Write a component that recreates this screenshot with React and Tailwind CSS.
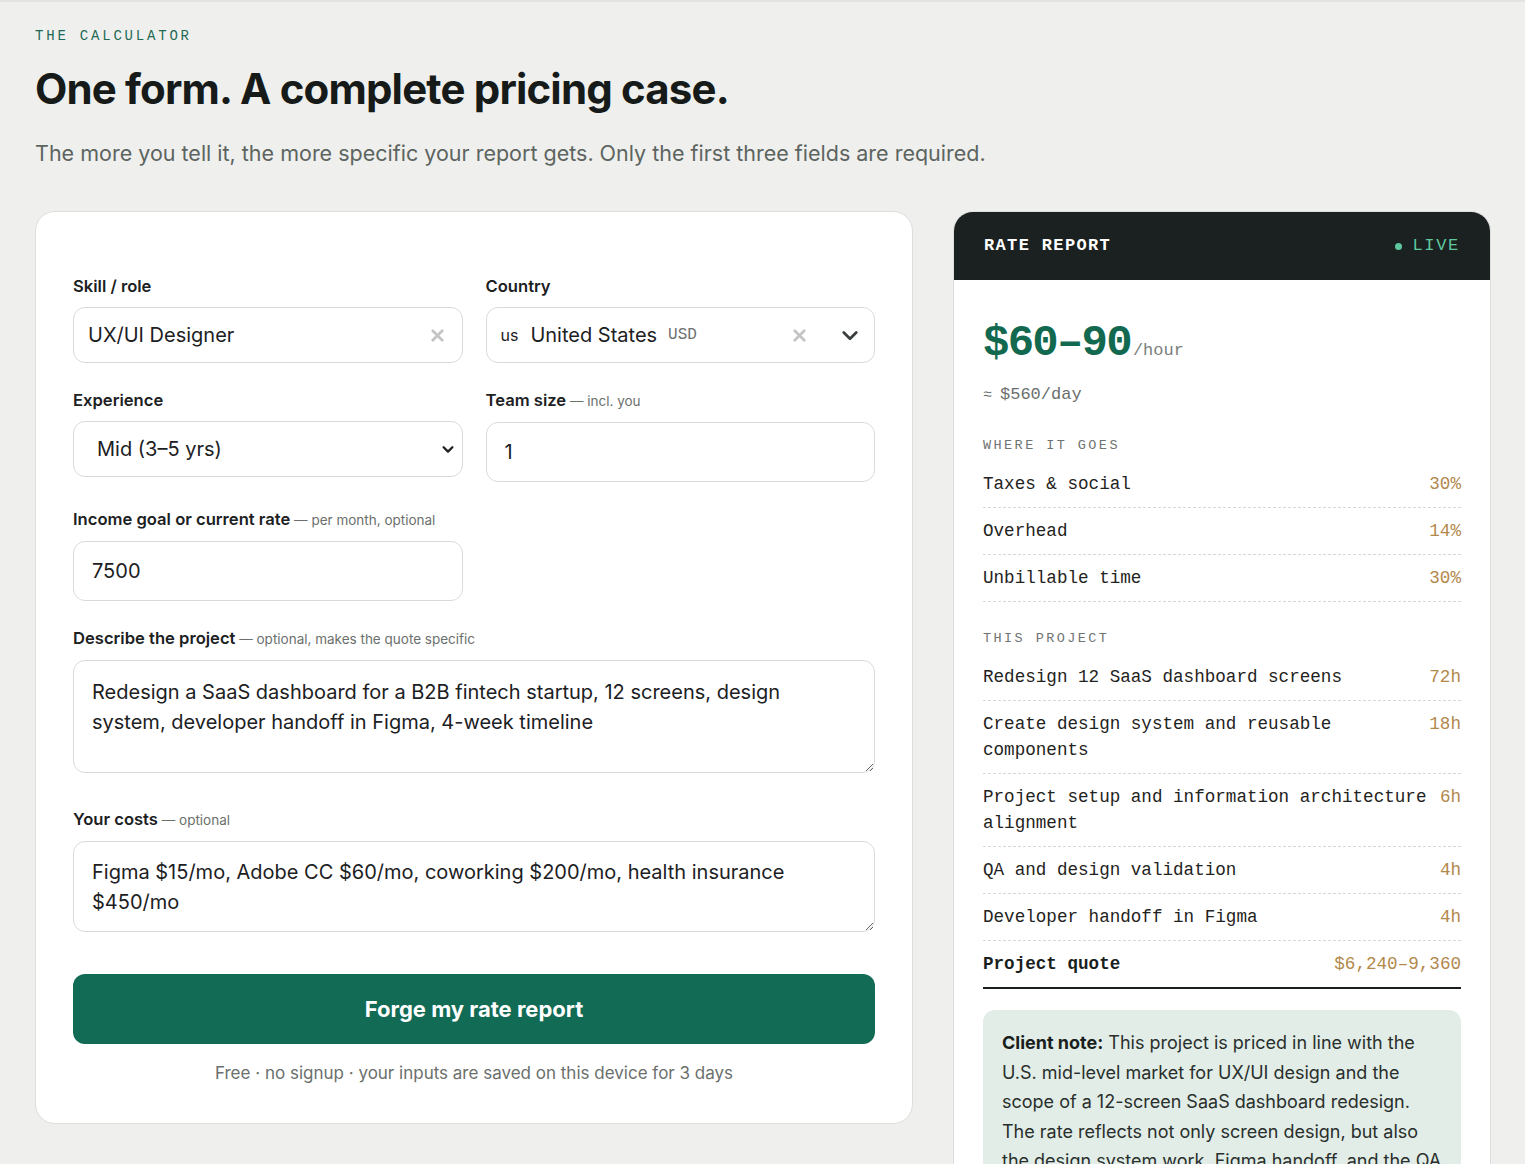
import React from "react";

const mono = { fontFamily: '"Liberation Mono", "DejaVu Sans Mono", monospace' };

const XIcon = ({ className }) => (
  <svg viewBox="0 0 16 16" className={className} fill="none" stroke="currentColor" strokeWidth="2.6" strokeLinecap="round">
    <path d="M3.5 3.5l9 9M12.5 3.5l-9 9" />
  </svg>
);

const Chevron = ({ className, width = 2.2 }) => (
  <svg viewBox="0 0 16 16" className={className} fill="none" stroke="currentColor" strokeWidth={width} strokeLinecap="round" strokeLinejoin="round">
    <path d="M3 6l5 5 5-5" />
  </svg>
);

const Label = ({ title, hint }) => (
  <div className="mb-[11px] leading-5 text-[16.6px] font-semibold text-[#1c211f]">
    {title}
    {hint && <span className="text-[13.5px] font-normal text-[#6b706d]"> — {hint}</span>}
  </div>
);

const projectRows = [
  ["Redesign 12 SaaS dashboard screens", "72h"],
  ["Create design system and reusable components", "18h"],
  ["Project setup and information architecture alignment", "6h"],
  ["QA and design validation", "4h"],
  ["Developer handoff in Figma", "4h"],
];

const goesRows = [
  ["Taxes & social", "30%"],
  ["Overhead", "14%"],
  ["Unbillable time", "30%"],
];

const Row = ({ label, value }) => (
  <div className="flex justify-between gap-[10px] border-b border-dashed border-[#d8d8d8] py-[10px] text-[17.6px] leading-[26px] text-[#1f2321]" style={mono}>
    <span>{label}</span>
    <span className="text-[#b3884c] shrink-0">{value}</span>
  </div>
);

export default function App() {
  return (
    <div className="min-h-screen w-full bg-[#eff0ee] border-t-2 border-[#e2e4e2] pl-[35px] pr-[34px] pt-[24px] pb-10" style={{ fontFamily: "Inter, 'Noto Sans', sans-serif" }}>
      <div className="text-[14px] tracking-[0.2em] text-[#1f6a55]" style={mono}>THE CALCULATOR</div>
      <h1 className="mt-[16px] text-[42px] leading-[52px] font-bold tracking-[-0.02em] text-[#161b19]">
        One form. A complete pricing case.
      </h1>
      <p className="mt-[24px] text-[21.5px] leading-7 text-[#5d6460]">
        The more you tell it, the more specific your report gets. Only the first three fields are required.
      </p>

      <div className="mt-[44px] grid grid-cols-[1fr_538px] gap-10 items-start">
        {/* form */}
        <div className="bg-white rounded-[20px] border border-[#dedfdd] px-[37px] pt-[64px] pb-[38px]">
          <div className="grid grid-cols-2 gap-x-[23px] gap-y-[27px]">
            <div>
              <Label title="Skill / role" />
              <div className="h-[56px] rounded-[12px] border border-[#d9dbd9] flex items-center justify-between pl-[14px] pr-[16px] text-[20px] text-[#1c211f]">
                <span>UX/UI Designer</span>
                <XIcon className="w-[17px] h-[17px] text-[#c4c4c4]" />
              </div>
            </div>
            <div>
              <Label title="Country" />
              <div className="h-[56px] rounded-[12px] border border-[#d9dbd9] flex items-center pl-[14px] pr-[14px] text-[#1c211f]">
                <span className="text-[16px] mr-[12px]">us</span>
                <span className="text-[20px]">United States</span>
                <span className="text-[16px] text-[#6d716f] ml-[11px]" style={mono}>USD</span>
                <XIcon className="ml-auto w-[17px] h-[17px] text-[#c4c4c4]" />
                <Chevron className="ml-[32px] w-[20px] h-[20px] text-[#3a3f3d]" />
              </div>
            </div>
            <div>
              <Label title="Experience" />
              <div className="h-[56px] rounded-[12px] border border-[#d9dbd9] flex items-center justify-between pl-[23px] pr-[7px] text-[20px] text-[#1c211f]">
                <span>Mid (3–5 yrs)</span>
                <Chevron className="w-[14px] h-[14px] text-[#1c211f]" width={2.6} />
              </div>
            </div>
            <div>
              <Label title="Team size" hint="incl. you" />
              <div className="h-[60px] rounded-[12px] border border-[#d9dbd9] flex items-center pl-[18px] text-[20px] text-[#1c211f]">1</div>
            </div>
            <div>
              <Label title="Income goal or current rate" hint="per month, optional" />
              <div className="h-[60px] rounded-[12px] border border-[#d9dbd9] flex items-center pl-[18px] text-[20px] text-[#1c211f]">7500</div>
            </div>
            <div />
            <div className="col-span-2">
              <Label title="Describe the project" hint="optional, makes the quote specific" />
              <textarea
                readOnly
                className="block w-full h-[113px] rounded-[12px] border border-[#d9dbd9] px-[18px] pt-[16px] pr-[60px] text-[20px] leading-[30px] text-[#1c211f] outline-none"
                defaultValue="Redesign a SaaS dashboard for a B2B fintech startup, 12 screens, design system, developer handoff in Figma, 4-week timeline"
              />
            </div>
            <div className="col-span-2 mt-[9px]">
              <Label title="Your costs" hint="optional" />
              <textarea
                readOnly
                className="block w-full h-[91px] rounded-[12px] border border-[#d9dbd9] px-[18px] pt-[15px] pr-[60px] text-[20px] leading-[30px] text-[#1c211f] outline-none"
                defaultValue="Figma $15/mo, Adobe CC $60/mo, coworking $200/mo, health insurance $450/mo"
              />
            </div>
          </div>
          <button className="mt-[42px] w-full h-[70px] rounded-[12px] bg-[#116b55] text-white text-[22px] font-bold">
            Forge my rate report
          </button>
          <p className="mt-[17px] text-center text-[17px] leading-6 text-[#6b706d]">
            Free · no signup · your inputs are saved on this device for 3 days
          </p>
        </div>

        {/* report */}
        <div className="rounded-[20px] overflow-hidden border border-[#dedfdd] bg-white">
          <div className="h-[68px] bg-[#1a2120] flex items-center justify-between px-[30px]" style={mono}>
            <span className="text-[17px] font-bold tracking-[0.08em] text-white">RATE REPORT</span>
            <span className="flex items-center gap-[10px] text-[17px] tracking-[0.1em] text-[#5fc79d]">
              <span className="w-[7px] h-[7px] rounded-full bg-[#5fc79d]" />
              LIVE
            </span>
          </div>
          <div className="px-[29px] pt-[38px] pb-[30px]">
            <div className="flex items-baseline" style={mono}>
              <span className="text-[44px] leading-[50px] font-bold tracking-[-0.04em] text-[#12694f]">$60–90</span>
              <span className="ml-[2px] text-[17px] text-[#7a7e7c]">/hour</span>
            </div>
            <div className="mt-[14px] text-[17px] text-[#6a6e6c]" style={mono}>
              <span className="text-[15px] mr-[8px]">≈</span>$560/day
            </div>
            <div className="mt-[28px] text-[13.5px] tracking-[0.18em] text-[#6f7371]" style={mono}>WHERE IT GOES</div>
            <div className="mt-[5px]">
              {goesRows.map(([l, v]) => (
                <Row key={l} label={l} value={v} />
              ))}
            </div>
            <div className="mt-[27px] text-[13.5px] tracking-[0.18em] text-[#6f7371]" style={mono}>THIS PROJECT</div>
            <div className="mt-[5px]">
              {projectRows.map(([l, v]) => (
                <Row key={l} label={l} value={v} />
              ))}
              <div className="flex justify-between py-[10px] text-[17.6px] leading-[26px] border-b-2 border-[#1a1f1d]" style={mono}>
                <span className="font-bold text-[#1a1f1d]">Project quote</span>
                <span className="text-[#b3884c]">$6,240–9,360</span>
              </div>
            </div>
            <div className="mt-[21px] rounded-[12px] bg-[#e1ede6] px-[19px] py-[18px] text-[18px] leading-[29.5px] text-[#2a2f2d]">
              <span className="font-bold text-[#1a1f1d]">Client note:</span> This project is priced in line with the U.S. mid-level market for UX/UI design and the scope of a 12-screen SaaS dashboard redesign. The rate reflects not only screen design, but also the design system work, Figma handoff, and the QA and validation effort needed to deliver the project.
            </div>
          </div>
        </div>
      </div>
    </div>
  );
}
